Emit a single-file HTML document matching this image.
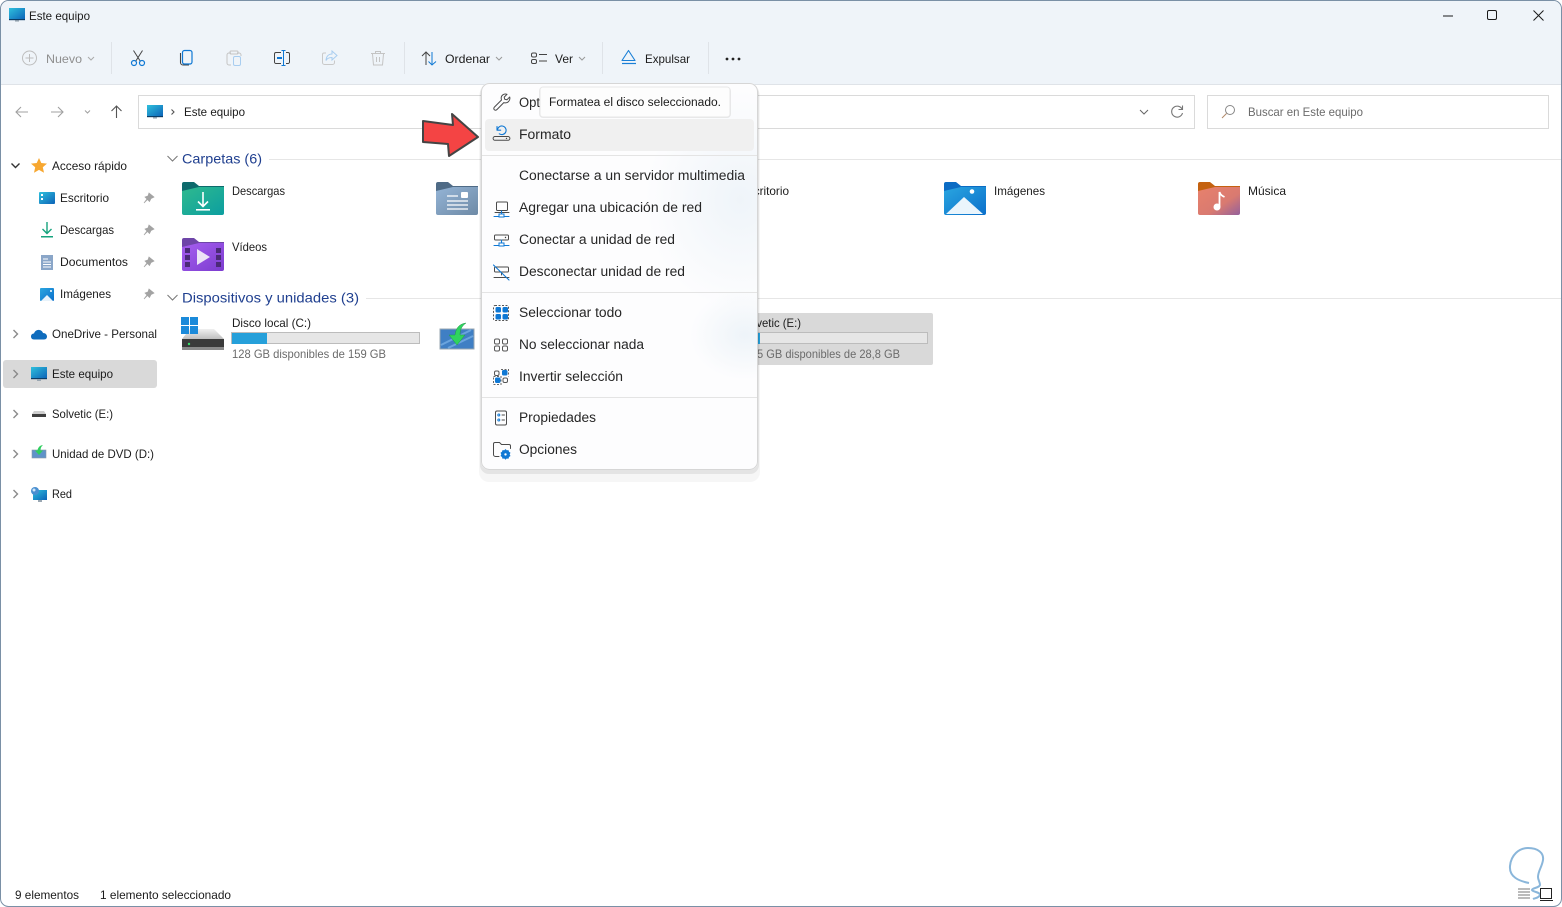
<!DOCTYPE html>
<html lang="es"><head><meta charset="utf-8"><title>Este equipo</title>
<style>
html,body{margin:0;padding:0;background:#fff;width:1562px;height:907px;overflow:hidden}
svg{display:block}
text{font-family:"Liberation Sans",sans-serif;font-size:12px;fill:#1c1c1c}
.m text,text.m{font-size:13.5px;fill:#262626}
.h{font-size:14px;fill:#1f3f8f}
.g{fill:#6b6b6b}
.d{fill:#8f8f8f}
.s{fill:none;stroke:#4a4a4a;stroke-width:1;stroke-linecap:round;stroke-linejoin:round}
.b{fill:none;stroke:#0f78d4;stroke-width:1.1;stroke-linecap:round;stroke-linejoin:round}
</style></head><body>
<svg width="1562" height="907" viewBox="0 0 1562 907" xmlns="http://www.w3.org/2000/svg">
<defs>
<linearGradient id="mon" x1="0" y1="0" x2="1" y2="1"><stop offset="0" stop-color="#2fc0dc"/><stop offset="1" stop-color="#0c63b8"/></linearGradient>
<linearGradient id="teal" x1="0" y1="0" x2="1" y2="1"><stop offset="0" stop-color="#2fba8e"/><stop offset="1" stop-color="#0c9ea0"/></linearGradient>
<linearGradient id="doc" x1="0" y1="0" x2="1" y2="1"><stop offset="0" stop-color="#94b4d6"/><stop offset="1" stop-color="#6e8aa6"/></linearGradient>
<linearGradient id="vid" x1="0" y1="0" x2="1" y2="1"><stop offset="0" stop-color="#a65ff0"/><stop offset="1" stop-color="#7c3ccf"/></linearGradient>
<linearGradient id="img" x1="0" y1="0" x2="1" y2="1"><stop offset="0" stop-color="#2aa6e0"/><stop offset="1" stop-color="#0b6fcb"/></linearGradient>
<linearGradient id="mus" x1="0" y1="0" x2="1" y2="1"><stop offset="0" stop-color="#e8816c"/><stop offset=".6" stop-color="#d97a70"/><stop offset="1" stop-color="#94609c"/></linearGradient>
<linearGradient id="drv" x1="0" y1="0" x2="0" y2="1"><stop offset="0" stop-color="#f0f0f0"/><stop offset="1" stop-color="#bfbfbf"/></linearGradient>
<radialGradient id="ac1"><stop offset="0" stop-color="#e6eff6" stop-opacity=".95"/><stop offset="1" stop-color="#e6eff6" stop-opacity="0"/></radialGradient>
<clipPath id="mc"><rect x="481" y="83" width="277" height="387" rx="8"/></clipPath>
</defs>

<!-- window -->
<rect x="0.5" y="0.5" width="1561" height="906" rx="8" fill="#fff" stroke="#7a90a6"/>
<path d="M1 84V9a8 8 0 0 1 8-8H1553a8 8 0 0 1 8 8V84Z" fill="#eff4f9"/>
<rect x="1" y="84" width="1560" height="1" fill="#dfe3e8"/>

<!-- title -->
<g><rect x="9" y="8" width="16" height="11.5" fill="url(#mon)"/><rect x="9" y="19" width="16" height="1.2" fill="#0b3d66"/><rect x="15" y="20" width="4" height="1.5" fill="#8a9aa8"/></g>
<text x="29" y="20" textLength="61" lengthAdjust="spacingAndGlyphs">Este equipo</text>

<!-- window controls -->
<path d="M1443 16h10" stroke="#1a1a1a" stroke-width="1" fill="none"/>
<rect x="1487.5" y="10.5" width="9" height="9" rx="1.5" fill="none" stroke="#1a1a1a"/>
<path d="M1533.5 10.5l10 10M1543.5 10.5l-10 10" stroke="#1a1a1a" fill="none"/>

<!-- toolbar -->
<circle cx="29.5" cy="58" r="7" fill="none" stroke="#bdbdbd"/><path d="M29.5 54v8M25.5 58h8" stroke="#bdbdbd" fill="none"/>
<text class="d" x="46" y="63" textLength="36" lengthAdjust="spacingAndGlyphs">Nuevo</text>
<path d="M88 57l3 3 3-3" fill="none" stroke="#aaa"/>
<g fill="#dfe3e8"><rect x="111" y="42" width="1" height="32"/><rect x="404" y="42" width="1" height="32"/><rect x="602" y="42" width="1" height="32"/><rect x="708" y="42" width="1" height="32"/></g>
<!-- cut -->
<path d="M133.5 50.5l7 11M142.5 50.5l-7 11" fill="none" stroke="#444" stroke-width="1"/>
<circle cx="134" cy="63" r="2.5" fill="none" stroke="#0f78d4" stroke-width="1.2"/><circle cx="142" cy="63" r="2.5" fill="none" stroke="#0f78d4" stroke-width="1.2"/>
<!-- copy -->
<path d="M180.500 53v9.500a2.500 2.500 0 0 0 2.500 2.500h6" fill="none" stroke="#444" stroke-width="1.100"/>
<rect x="182.500" y="50.500" width="9.500" height="13.500" rx="2" fill="#eff4f9" stroke="#0f78d4" stroke-width="1.200"/>
<!-- paste -->
<path d="M231 53h-2a2 2 0 0 0-2 2v8a2 2 0 0 0 2 2h2M237 53h2a2 2 0 0 1 2 2v1" fill="none" stroke="#c4c4c4"/><rect x="230" y="51" width="8" height="3" rx="1" fill="none" stroke="#c4c4c4"/>
<rect x="233.500" y="56.500" width="7" height="9" rx="1.500" fill="none" stroke="#a8cdf0"/>
<!-- rename -->
<path d="M281 52.500h-5a1.500 1.500 0 0 0-1.500 1.500v8a1.500 1.500 0 0 0 1.500 1.500h5M286 52.500h2a1.500 1.500 0 0 1 1.500 1.500v8a1.500 1.500 0 0 1-1.500 1.500h-2" fill="none" stroke="#444"/>
<path d="M283.500 51v14M281.500 50.500h4M281.500 65.500h4" fill="none" stroke="#0f78d4"/><rect x="277" y="57" width="5" height="2" fill="#0f78d4"/>
<!-- share -->
<path d="M326 53h-2a1.500 1.500 0 0 0-1.500 1.500v8a2 2 0 0 0 2 2h8a2 2 0 0 0 2-2v-2" fill="none" stroke="#c9c9c9"/>
<path d="M332 51l5 4.500-5 4.500v-2.500c-3 0-5 1-6 3 .3-4 2.500-6.500 6-6.500z" fill="none" stroke="#a8cdf0"/>
<!-- delete -->
<path d="M371 53.500h14M375.500 53.500v-2h5v2M372.500 54l1 11h9l1-11M376.500 57v5M379.500 57v5" fill="none" stroke="#c4c4c4"/>
<!-- sort -->
<path d="M426 65V52M422 56l4-4 4 4" fill="none" stroke="#444"/><path d="M432 52v13M428.500 61.500l3.500 3.500 4-3.500" fill="none" stroke="#0f78d4"/>
<text x="445" y="63" textLength="45" lengthAdjust="spacingAndGlyphs">Ordenar</text>
<path d="M496 57l3 3 3-3" fill="none" stroke="#999"/>
<!-- view -->
<rect x="531.500" y="53" width="5" height="4" rx="1.500" fill="none" stroke="#444"/><rect x="531.500" y="59.500" width="5" height="4" rx="1.500" fill="none" stroke="#444"/>
<path d="M539 54.500h8M539 61h8" stroke="#444" fill="none"/>
<text x="555" y="63" textLength="18" lengthAdjust="spacingAndGlyphs">Ver</text>
<path d="M579 57l3 3 3-3" fill="none" stroke="#999"/>
<!-- eject -->
<path d="M622 60.500l6.500-10 6.500 10z" fill="none" stroke="#1a7fd6" stroke-width="1.100" stroke-linejoin="round"/><path d="M622 63.500h14" stroke="#1a7fd6" stroke-width="1.200"/>
<text x="645" y="63" textLength="45" lengthAdjust="spacingAndGlyphs">Expulsar</text>
<g fill="#222"><circle cx="727" cy="59" r="1.400"/><circle cx="733" cy="59" r="1.400"/><circle cx="739" cy="59" r="1.400"/></g>

<!-- nav -->
<path d="M28 112H16.500M21 107l-5 5 5 5" fill="none" stroke="#a0a0a0" stroke-width="1.100"/>
<path d="M51 112h11.500M58 107l5 5-5 5" fill="none" stroke="#a0a0a0" stroke-width="1.100"/>
<path d="M85 110.500l2.500 2.500 2.500-2.500" fill="none" stroke="#a0a0a0"/>
<path d="M116.500 118V106.500M111.500 111l5-5 5 5" fill="none" stroke="#555" stroke-width="1.100"/>

<rect x="138.500" y="95.500" width="1056" height="33" fill="#fff" stroke="#dadada"/>
<rect x="1207.500" y="95.500" width="341" height="33" fill="#fff" stroke="#dadada"/>
<g><rect x="147" y="105" width="16" height="11.500" fill="url(#mon)"/><rect x="147" y="116" width="16" height="1.200" fill="#0b3d66"/><rect x="153" y="117" width="4" height="1.500" fill="#8a9aa8"/></g>
<path d="M171.500 109.500l2.500 2.500-2.500 2.500" fill="none" stroke="#555" stroke-width="1.100"/>
<text x="184" y="116" textLength="61" lengthAdjust="spacingAndGlyphs">Este equipo</text>
<path d="M1140 110l4 4 4-4" fill="none" stroke="#666"/>
<path d="M1182 109a5.500 5.500 0 1 0 0.500 4M1182.500 105.500v4h-4" fill="none" stroke="#777" stroke-width="1.100"/>
<circle cx="1230" cy="110" r="4.500" fill="none" stroke="#888"/><path d="M1226.500 113.500l-4.500 4.500" stroke="#b08a68" fill="none"/>
<text class="g" x="1248" y="116" textLength="115" lengthAdjust="spacingAndGlyphs">Buscar en Este equipo</text>

<!-- sidebar -->
<rect x="3" y="360" width="154" height="28" rx="3" fill="#d9d9d9"/>
<path d="M11.500 163.500l4 4 4-4" fill="none" stroke="#333" stroke-width="1.400"/>
<g fill="none" stroke="#8a8a8a" stroke-width="1.400"><path d="M13.500 330l4 4-4 4"/><path d="M13.500 370l4 4-4 4"/><path d="M13.500 410l4 4-4 4"/><path d="M13.500 450l4 4-4 4"/><path d="M13.500 490l4 4-4 4"/></g>
<path d="M39 158l2.300 5 5.700.6-4.200 3.700 1.200 5.400-5-2.800-5 2.800 1.200-5.400-4.200-3.700 5.700-.6z" fill="#f7a730"/>
<text x="52" y="170" textLength="75" lengthAdjust="spacingAndGlyphs">Acceso rápido</text>
<rect x="39" y="192" width="16" height="12" rx="1" fill="url(#mon)"/><rect x="41" y="194" width="2" height="2" fill="#fff"/><rect x="41" y="198" width="2" height="2" fill="#fff"/>
<text x="60" y="202" textLength="49" lengthAdjust="spacingAndGlyphs">Escritorio</text>
<path d="M47 222v11M42.500 229l4.500 4.500 4.500-4.500" fill="none" stroke="#16a37d" stroke-width="1.400"/><rect x="41" y="236" width="12" height="1.500" fill="#16a37d"/>
<text x="60" y="234" textLength="54" lengthAdjust="spacingAndGlyphs">Descargas</text>
<rect x="41" y="255" width="12" height="15" fill="#8aa6c8"/><path d="M43 259h5M43 262h8M43 264.500h8M43 267h8" stroke="#fff" fill="none"/>
<text x="60" y="266" textLength="68" lengthAdjust="spacingAndGlyphs">Documentos</text>
<rect x="40" y="288" width="14" height="13" rx="1" fill="url(#img)"/><path d="M41 301l6-6 6 6z" fill="#e8f3fb"/><circle cx="51" cy="291" r="1" fill="#fff"/>
<text x="60" y="298" textLength="51" lengthAdjust="spacingAndGlyphs">Imágenes</text>
<g fill="#a3a3a3" stroke="#a3a3a3" stroke-width=".7"><path d="M149 193l5 4-3 1.500-1.500 3-2-2-3.500 3.500 3-4-2-2 3-1z"/><path d="M149 225l5 4-3 1.500-1.500 3-2-2-3.500 3.500 3-4-2-2 3-1z"/><path d="M149 257l5 4-3 1.500-1.500 3-2-2-3.500 3.500 3-4-2-2 3-1z"/><path d="M149 289l5 4-3 1.500-1.500 3-2-2-3.500 3.500 3-4-2-2 3-1z"/></g>
<path d="M31 336.500c0-2 1.500-3 3-3 .8-2.500 3-4 5.500-3.500 2 .4 3 1.500 3.500 3 2.200 0 4 1.400 4 3.500 0 1.500-1 3-3 3H34c-2 0-3-1.500-3-3z" fill="#0f6cbd"/>
<text x="52" y="338" textLength="105" lengthAdjust="spacingAndGlyphs">OneDrive - Personal</text>
<g><rect x="31" y="367" width="16" height="11.500" fill="url(#mon)"/><rect x="31" y="378" width="16" height="1.200" fill="#0b3d66"/><rect x="37" y="379" width="4" height="2" fill="#9aa7b2"/></g>
<text x="52" y="378" textLength="61" lengthAdjust="spacingAndGlyphs">Este equipo</text>
<path d="M34 411h10l2 3H32z" fill="#cfcfcf"/><rect x="32" y="414" width="14" height="3" fill="#3f3f3f"/>
<text x="52" y="418" textLength="61" lengthAdjust="spacingAndGlyphs">Solvetic (E:)</text>
<rect x="32" y="450" width="14" height="8" fill="#5f93c9" stroke="#8b9aa8" stroke-width=".6"/><path d="M35 450.500l4 4.500 4-4.500h-2.500c0-2.500 .8-4 2.500-5.500-3.500 .5-5 2.500-5.500 5.500z" fill="#2fcf5f"/>
<text x="52" y="458" textLength="102" lengthAdjust="spacingAndGlyphs">Unidad de DVD (D:)</text>
<rect x="33" y="490" width="14" height="10" fill="url(#mon)"/><rect x="38" y="500" width="4" height="2" fill="#9aa7b2"/><circle cx="35" cy="491" r="4" fill="#4a8fd0"/><circle cx="34" cy="490" r="1.500" fill="#cfe6f8"/>
<text x="52" y="498" textLength="20" lengthAdjust="spacingAndGlyphs">Red</text>

<!-- section headers -->
<path d="M167.500 156l5 5 5-5" fill="none" stroke="#777"/>
<text class="h" x="182" y="163.500" textLength="80" lengthAdjust="spacingAndGlyphs">Carpetas (6)</text>
<rect x="269" y="159" width="1292" height="1" fill="#e6e6e6"/>
<path d="M167.500 295l5 5 5-5" fill="none" stroke="#777"/>
<text class="h" x="182" y="302.500" textLength="177" lengthAdjust="spacingAndGlyphs">Dispositivos y unidades (3)</text>
<rect x="366" y="298" width="1195" height="1" fill="#e6e6e6"/>

<!-- folders -->
<path d="M182 184a2 2 0 0 1 2-2h10l5 4h25v5h-42z" fill="#0d6a6c"/>
<path d="M182 191l17-4h25v26a2 2 0 0 1-2 2h-38a2 2 0 0 1-2-2z" fill="url(#teal)"/>
<path d="M203 192v14M198 201.500l5 5 5-5" fill="none" stroke="#fff" stroke-width="1.600"/><rect x="196" y="209" width="14" height="1.600" fill="#fff"/>
<text x="232" y="195" textLength="53" lengthAdjust="spacingAndGlyphs">Descargas</text>

<path d="M436 184a2 2 0 0 1 2-2h10l5 4h25v5h-42z" fill="#4f6b86"/>
<path d="M436 191l17-4h25v26a2 2 0 0 1-2 2h-38a2 2 0 0 1-2-2z" fill="url(#doc)"/>
<path d="M447 196h11M447 201h21M447 205h21M447 209h21" stroke="#fff" stroke-width="1.300" fill="none"/><rect x="461" y="192" width="7" height="6" rx="1" fill="#fff"/>

<path d="M182 240a2 2 0 0 1 2-2h10l5 4h25v5h-42z" fill="#6e45a8"/>
<path d="M182 247l17-4h25v26a2 2 0 0 1-2 2h-38a2 2 0 0 1-2-2z" fill="url(#vid)"/>
<g fill="#4b2a78"><rect x="185" y="248" width="5" height="5"/><rect x="185" y="255" width="5" height="5"/><rect x="185" y="262" width="5" height="5"/><rect x="216" y="248" width="5" height="5"/><rect x="216" y="255" width="5" height="5"/><rect x="216" y="262" width="5" height="5"/></g>
<path d="M197 249l13 8-13 8z" fill="#ece4f6"/>
<text x="232" y="251" textLength="35" lengthAdjust="spacingAndGlyphs">Vídeos</text>

<text x="740" y="195" textLength="49" lengthAdjust="spacingAndGlyphs">Escritorio</text>

<path d="M944 184a2 2 0 0 1 2-2h10l5 4h25v5h-42z" fill="#0b6cc4"/>
<path d="M944 191l17-4h25v26a2 2 0 0 1-2 2h-38a2 2 0 0 1-2-2z" fill="url(#img)"/>
<path d="M946 214l18-17 19 17z" fill="#eaf5fc"/><circle cx="972" cy="191.500" r="2.300" fill="#fff"/>
<text x="994" y="195" textLength="51" lengthAdjust="spacingAndGlyphs">Imágenes</text>

<path d="M1198 184a2 2 0 0 1 2-2h10l5 4h25v5h-42z" fill="#c4610f"/>
<path d="M1198 191l17-4h25v26a2 2 0 0 1-2 2h-38a2 2 0 0 1-2-2z" fill="url(#mus)"/>
<circle cx="1217" cy="207" r="3.500" fill="#fff"/><path d="M1219.500 207v-15c1 3 3 4 5 5" fill="none" stroke="#fff" stroke-width="1.800"/>
<text x="1248" y="195" textLength="38" lengthAdjust="spacingAndGlyphs">Música</text>

<!-- drives -->
<path d="M190 329h24l10 10h-42z" fill="url(#drv)"/><rect x="182" y="339" width="42" height="11" fill="#3a3a3a"/><rect x="182" y="347" width="42" height="3" fill="#8a8a8a"/><circle cx="189" cy="344" r="1.200" fill="#37e06a"/>
<g fill="#1b8ada"><rect x="181" y="317" width="8" height="8"/><rect x="190" y="317" width="8" height="8"/><rect x="181" y="326" width="8" height="8"/><rect x="190" y="326" width="8" height="8"/></g>
<text x="232" y="327" textLength="79" lengthAdjust="spacingAndGlyphs">Disco local (C:)</text>
<rect x="231.500" y="332.500" width="188" height="11" fill="#e6e6e6" stroke="#bcbcbc"/><rect x="232" y="333" width="35" height="11" fill="#26a0da"/>
<text class="g" x="232" y="358" textLength="154" lengthAdjust="spacingAndGlyphs">128 GB disponibles de 159 GB</text>

<rect x="440" y="329" width="34" height="20" fill="#3f7fc4" stroke="#9aa7b2"/><path d="M441 345l30-15M448 348l25-12" stroke="#6aa4de" fill="none" stroke-width="2"/>
<path d="M449 335l8 10 8-10h-5c0-6 2-9 6-12-7 1-10 5-11 12z" fill="#2fd35f" stroke="#1f9a46" stroke-width=".5"/>

<rect x="690" y="313" width="243" height="52" rx="2" fill="#d9d9d9"/>
<text x="740" y="327" textLength="61" lengthAdjust="spacingAndGlyphs">Solvetic (E:)</text>
<rect x="739.500" y="332.500" width="188" height="11" fill="#e6e6e6" stroke="#bcbcbc"/><rect x="740" y="333" width="20" height="11" fill="#26a0da"/>
<text class="g" x="757" y="358" textLength="143" lengthAdjust="spacingAndGlyphs">5 GB disponibles de 28,8 GB</text>

<!-- status bar -->
<text x="15" y="899" textLength="64" lengthAdjust="spacingAndGlyphs">9 elementos</text>
<text x="100" y="899" textLength="131" lengthAdjust="spacingAndGlyphs">1 elemento seleccionado</text>

<!-- watermark + view buttons -->
<path d="M1529 883c-10-2-20-6-19-17 1-11 9-18 18-18 10 0 16 5 15 12-1 7-5 11-5 17 0 3 2 5 2 8-1 3-8 3-8 5 1 2 8 2 8 5-1 3-5 3-7 4" fill="none" stroke="#8ab6da" stroke-width="2"/>
<path d="M1518 889h12M1518 892h12M1518 895h12M1518 898h12" stroke="#777" fill="none"/>
<rect x="1540.500" y="888.500" width="11" height="10" fill="none" stroke="#222"/><path d="M1540 900.500h13" stroke="#222" fill="none"/>

<!-- menu -->
<rect x="479" y="86" width="281" height="396" rx="10" fill="#000" opacity=".035"/>
<rect x="480" y="84" width="279" height="390" rx="9" fill="#000" opacity=".07"/>
<rect x="481" y="83" width="277" height="387" rx="8" fill="#fdfdfe"/>
<g clip-path="url(#mc)">
<ellipse cx="745" cy="335" rx="55" ry="45" fill="url(#ac1)" opacity=".7"/>
<ellipse cx="740" cy="200" rx="95" ry="110" fill="url(#ac1)" opacity=".65"/>
</g>
<rect x="481.500" y="83.500" width="276" height="386" rx="8" fill="none" stroke="#d6d6d6"/>
<rect x="485" y="119" width="269" height="32" rx="4" fill="#f0f0f0"/>
<g fill="#e4e4e4"><rect x="482" y="155" width="275" height="1"/><rect x="482" y="292" width="275" height="1"/><rect x="482" y="397" width="275" height="1"/></g>
<g class="m">
<text x="519" y="107" textLength="21" lengthAdjust="spacingAndGlyphs">Opt</text>
<text x="519" y="139" textLength="52" lengthAdjust="spacingAndGlyphs">Formato</text>
<text x="519" y="180" textLength="226" lengthAdjust="spacingAndGlyphs">Conectarse a un servidor multimedia</text>
<text x="519" y="212" textLength="183" lengthAdjust="spacingAndGlyphs">Agregar una ubicación de red</text>
<text x="519" y="244" textLength="156" lengthAdjust="spacingAndGlyphs">Conectar a unidad de red</text>
<text x="519" y="276" textLength="166" lengthAdjust="spacingAndGlyphs">Desconectar unidad de red</text>
<text x="519" y="317" textLength="103" lengthAdjust="spacingAndGlyphs">Seleccionar todo</text>
<text x="519" y="349" textLength="125" lengthAdjust="spacingAndGlyphs">No seleccionar nada</text>
<text x="519" y="381" textLength="104" lengthAdjust="spacingAndGlyphs">Invertir selección</text>
<text x="519" y="422" textLength="77" lengthAdjust="spacingAndGlyphs">Propiedades</text>
<text x="519" y="454" textLength="58" lengthAdjust="spacingAndGlyphs">Opciones</text>
</g>
<!-- menu icons -->
<path class="s" d="M494.500 107l7-7c-.7-2.300 0-4.200 1.400-5.200 1.200-.8 2.700-.9 4.100-.5l-2.800 2.800.5 2.200 2.200.5 2.800-2.800c.5 1.800-.1 3.500-1.200 4.600-1.100 1.100-2.800 1.600-4.700 1l-6.800 6.900c-.9.900-2.100.9-2.700.2-.7-.7-.7-1.800.2-2.700z"/>
<path class="s" d="M495 136.500h13a1.900 1.900 0 0 1 1.900 1.900v0a1.900 1.900 0 0 1-1.900 1.900h-13a1.900 1.900 0 0 1-1.900-1.900v0a1.900 1.900 0 0 1 1.900-1.900z"/><circle cx="506.500" cy="138.400" r=".7" fill="#4a4a4a"/>
<path class="b" d="M497.500 130a4.300 4.300 0 1 1 1.800 3.800M497 126.500v3.700h3.700"/>
<rect class="s" x="496.500" y="202" width="11" height="8.500" rx="1"/><path class="s" d="M495 212.500h14"/><path class="b" d="M501.500 211v3M494 216.500h15"/><rect x="499" y="214" width="5" height="3" fill="#fff" stroke="#0f78d4"/>
<rect class="s" x="494.500" y="235" width="14" height="5" rx="1"/><circle cx="505.500" cy="237.500" r=".7" fill="#3a3a3a"/><path class="b" d="M501.500 240v3M494 245.500h15"/><rect x="499" y="243" width="5" height="3" fill="#fff" stroke="#0f78d4"/>
<rect class="s" x="494.500" y="267" width="14" height="5" rx="1"/><path class="s" d="M501.500 272v3M494 277.500h15"/><path class="b" d="M493.500 265l15.500 15"/>
<g fill="#0f78d4"><rect x="495.500" y="307" width="5.500" height="5.500" rx="1.500"/><rect x="502.500" y="307" width="5.500" height="5.500" rx="1.500"/><rect x="495.500" y="314" width="5.500" height="5.500" rx="1.500"/><rect x="502.500" y="314" width="5.500" height="5.500" rx="1.500"/></g>
<rect x="493.500" y="305.500" width="15" height="15" rx="1.500" fill="none" stroke="#555" stroke-dasharray="2 1.500"/>
<g fill="none" stroke="#555"><rect x="494.500" y="339" width="5" height="5" rx="1.500"/><rect x="502.500" y="339" width="5" height="5" rx="1.500"/><rect x="494.500" y="346" width="5" height="5" rx="1.500"/><rect x="502.500" y="346" width="5" height="5" rx="1.500"/>
<rect x="494.500" y="371" width="4.500" height="4.500" rx="1.500"/><rect x="503" y="378" width="4.500" height="4.500" rx="1.500"/></g>
<rect x="502" y="370" width="5.500" height="5.500" rx="1.500" fill="#0f78d4"/><rect x="495" y="377.500" width="5.500" height="5.500" rx="1.500" fill="#0f78d4"/>
<path d="M501 369.500h7.500v7M493.500 376.500h7.500v8h-7.500z" fill="none" stroke="#666" stroke-dasharray="2 1.500"/>
<rect class="s" x="495.500" y="411" width="11" height="14" rx="1.500"/><path class="s" d="M502 415h2.500M502 420h2.500"/><circle cx="498.800" cy="415" r="1" fill="none" stroke="#0f78d4"/><circle cx="498.800" cy="420" r="1" fill="none" stroke="#0f78d4"/>
<path class="s" d="M499 456.500h-3.500a2 2 0 0 1-2-2v-10.500a1.500 1.500 0 0 1 1.500-1.500h4.500l2 2h7.500a1.500 1.500 0 0 1 1.500 1.500v2.500"/>
<path d="M505.500 449l1.200 1.300 1.800-.2.500 1.700 1.500 1-.8 1.600.8 1.600-1.500 1-.5 1.700-1.800-.2-1.200 1.300-1.200-1.300-1.800.2-.5-1.700-1.500-1 .8-1.600-.8-1.600 1.500-1 .5-1.700 1.800.2z" fill="#0f78d4"/><circle cx="505.500" cy="454.400" r="1.200" fill="#fff"/>

<!-- tooltip -->
<rect x="539" y="87" width="192" height="31" rx="4" fill="#000" opacity=".08"/>
<rect x="540" y="87" width="190" height="30" rx="3" fill="#fdfdfd" stroke="#e8e8e8"/>
<text x="549" y="106" textLength="172" lengthAdjust="spacingAndGlyphs" style="font-size:11.5px">Formatea el disco seleccionado.</text>

<!-- red arrow -->
<path d="M423 121l30 4-1-11 26 23-29 19-1-12-25-2z" fill="#f44444" stroke="#444" stroke-width="2" stroke-linejoin="round"/>
</svg>
</body></html>
